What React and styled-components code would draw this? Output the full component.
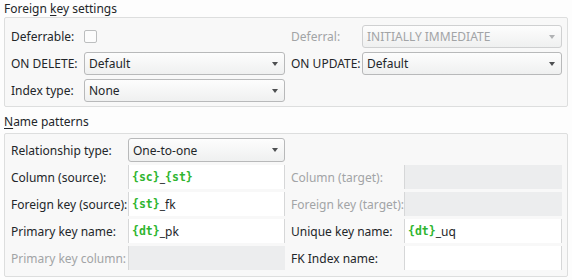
import React from "react";
import styled, { createGlobalStyle } from "styled-components";

const Global = createGlobalStyle`
  body {
    margin: 0;
    background: #fdfdfd;
    font-family: "Noto Sans", "DejaVu Sans", sans-serif;
    font-size: 12px;
    color: #232629;
  }
`;

const Page = styled.div`
  width: 572px;
  height: 280px;
  padding: 0 4px;
  box-sizing: border-box;
`;

const Title = styled.div`
  font-size: 12px;
  height: 17px;
  line-height: 17px;
  padding-bottom: ${(p) => p.$pb || 0}px;
  & u {
    text-decoration-thickness: 1px;
    text-underline-offset: 2px;
  }
`;

const Box = styled.div`
  box-sizing: border-box;
  width: 564px;
  background: #f8f8f8;
  border: 1px solid #dddede;
  border-radius: 2px;
  padding: ${(p) => p.$pad};
  margin-bottom: ${(p) => p.$mb || 0}px;
  display: grid;
  grid-template-columns: ${(p) => p.$cols};
  row-gap: ${(p) => p.$gap}px;
  align-items: center;
`;

const Label = styled.div`
  white-space: nowrap;
  color: ${(p) => (p.$disabled ? "#a2a4a6" : "#232629")};
  padding-left: 1px;
`;

const Check = styled.div`
  width: 11px;
  height: 11px;
  border: 1px solid #bcbebf;
  border-radius: 2px;
  background: #fcfcfc;
`;

const ComboBox = styled.div`
  box-sizing: border-box;
  height: ${(p) => p.$h || 24}px;
  display: flex;
  align-items: center;
  justify-content: space-between;
  padding: 0 6px 0 4px;
  border: 1px solid ${(p) => (p.$disabled ? "#cfd0d1" : "#b8b9ba")};
  border-radius: 3px;
  background: linear-gradient(#fdfdfd, #eff0f0);
  color: ${(p) => (p.$disabled ? "#a2a4a6" : "#232629")};
  margin-right: ${(p) => p.$mr || 0}px;
`;

const Arrow = styled.span`
  width: 0;
  height: 0;
  border-left: 3.5px solid transparent;
  border-right: 3.5px solid transparent;
  border-top: 4px solid ${(p) => (p.$disabled ? "#b0b2b4" : "#4d4f51")};
`;

const Field = styled.div`
  box-sizing: border-box;
  height: 24px;
  display: flex;
  align-items: center;
  padding-left: 3px;
  background: ${(p) => (p.$disabled ? "#ecedee" : "#ffffff")};
  border-left: 1px solid #d6d7d8;
  border-right: 1px solid ${(p) => (p.$disabled ? "#ecedee" : "#d6d7d8")};
  margin-right: ${(p) => p.$mr || 0}px;
`;

const Code = styled.span`
  font-family: "DejaVu Sans Mono", monospace;
  font-weight: bold;
  font-size: 11.5px;
  color: #2fb52f;
`;

const Blank = styled.div``;

function Combo({ value, disabled, mr, h }) {
  return (
    <ComboBox $disabled={disabled} $mr={mr} $h={h}>
      <span>{value}</span>
      <Arrow $disabled={disabled} />
    </ComboBox>
  );
}

export default function App() {
  return (
    <Page>
      <Global />
      <Title>
        Foreign <u>k</u>ey settings
      </Title>
      <Box $pad="7px 5px 4px 5px" $cols="74px 206px 72px 200px" $gap={4} $mb={6}>
        <Label>Deferrable:</Label>
        <Check />
        <Label $disabled>Deferral:</Label>
        <Combo value="INITIALLY IMMEDIATE" disabled h={23} />

        <Label>ON DELETE:</Label>
        <Combo value="Default" mr={5} h={23} />
        <Label>ON UPDATE:</Label>
        <Combo value="Default" h={23} />

        <Label>Index type:</Label>
        <Combo value="None" mr={5} h={23} />
        <Blank />
        <Blank />
      </Box>

      <Title $pb={3}>
        <u>N</u>ame patterns
      </Title>
      <Box $pad="4px 5px 6px 5px" $cols="118px 162px 114px 158px" $gap={3}>
        <Label>Relationship type:</Label>
        <Combo value="One-to-one" mr={5} />
        <Blank />
        <Blank />

        <Label>Column (source):</Label>
        <Field $mr={5}>
          <Code>{"{sc}"}</Code>_<Code>{"{st}"}</Code>
        </Field>
        <Label $disabled>Column (target):</Label>
        <Field $disabled />

        <Label>Foreign key (source):</Label>
        <Field $mr={5}>
          <Code>{"{st}"}</Code>_fk
        </Field>
        <Label $disabled>Foreign key (target):</Label>
        <Field $disabled />

        <Label>Primary key name:</Label>
        <Field $mr={5}>
          <Code>{"{dt}"}</Code>_pk
        </Field>
        <Label>Unique key name:</Label>
        <Field>
          <Code>{"{dt}"}</Code>_uq
        </Field>

        <Label $disabled>Primary key column:</Label>
        <Field $disabled $mr={5} />
        <Label>FK Index name:</Label>
        <Field />
      </Box>
    </Page>
  );
}
